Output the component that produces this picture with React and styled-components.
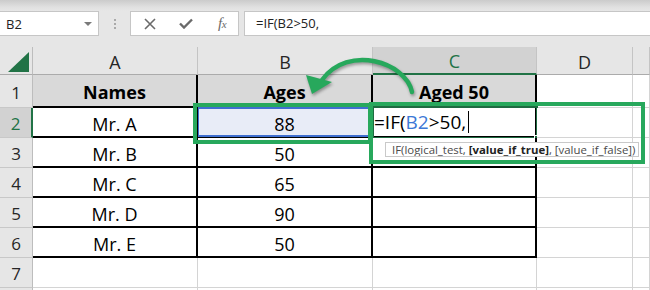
import React from "react";
import styled, { createGlobalStyle } from "styled-components";

const GlobalStyle = createGlobalStyle`
  html, body {
    margin: 0;
    padding: 0;
  }
  body {
    width: 650px;
    height: 290px;
    overflow: hidden;
    background: #fff;
    font-family: "Open Sans", "Liberation Sans", sans-serif;
  }
`;

const Window = styled.div`
  width: 650px;
  height: 290px;
  overflow: hidden;
  display: flex;
  flex-direction: column;
`;

const FormulaBar = styled.div`
  flex: none;
  height: 47px;
  box-sizing: border-box;
  padding-top: 11px;
  display: flex;
  align-items: flex-start;
  background: linear-gradient(#cbcbcb 0, #e0e0e0 7px, #e6e6e6 11px);
`;

const NameBox = styled.div`
  width: 100px;
  height: 25px;
  margin-left: -1px;
  box-sizing: border-box;
  padding: 0 6px 0 6px;
  display: flex;
  align-items: center;
  justify-content: space-between;
  background: #fff;
  border: 1px solid #c6c6c6;
  font-size: 13px;
  color: #222;
`;

const Caret = styled.span`
  width: 0;
  height: 0;
  border-left: 4px solid transparent;
  border-right: 4px solid transparent;
  border-top: 4px solid #7a7a7a;
`;

const Grip = styled.div`
  width: 31px;
  height: 25px;
  display: flex;
  flex-direction: column;
  align-items: center;
  justify-content: center;
  gap: 2px;

  span {
    width: 2px;
    height: 2px;
    background: #a9a9a9;
  }
`;

const FxButtons = styled.div`
  width: 109px;
  height: 25px;
  box-sizing: border-box;
  padding-left: 1px;
  display: grid;
  grid-template-columns: repeat(3, 36px);
  align-items: center;
  justify-items: center;
  background: #fff;
  border: 1px solid #c6c6c6;
  color: #6a6a6a;
`;

const FxLabel = styled.span`
  font-family: "Liberation Serif", serif;
  font-style: italic;
  font-size: 15px;
  color: #6a6a6a;
  letter-spacing: -0.5px;

  small {
    font-size: 11px;
  }
`;

const FormulaInput = styled.div`
  flex: 1;
  height: 25px;
  margin-left: 5px;
  box-sizing: border-box;
  padding-left: 11px;
  background: #fff;
  border: 1px solid #c6c6c6;
  border-right: none;
  font-size: 13px;
  line-height: 23px;
  color: #222;
`;

const Sheet = styled.div`
  position: relative;
  flex: 1;
  background: #fff;
`;

const Grid = styled.div`
  display: grid;
  grid-template-columns: 33px 165px 175px 164px 96px 1fr;
  grid-template-rows: 28px 33px repeat(6, 30px) 4px;
`;

const Corner = styled.div`
  box-sizing: border-box;
  display: flex;
  justify-content: flex-end;
  align-items: flex-end;
  padding: 0 3px 2px 0;
  background: #e6e6e6;
  border-right: 1px solid #bdbdbd;
  border-bottom: 1px solid #ababab;

  &::after {
    content: "";
    width: 0;
    height: 0;
    border-left: 21px solid transparent;
    border-bottom: 20px solid #217346;
  }
`;

const ColHead = styled.div`
  box-sizing: border-box;
  display: flex;
  align-items: center;
  justify-content: center;
  padding-top: 2px;
  font-size: 18px;
  color: ${(p) => (p.$active ? "#217346" : "#262626")};
  background: ${(p) => (p.$active ? "#d2d2d2" : "#e6e6e6")};
  border-right: 1px solid #c4c4c4;
  border-bottom: ${(p) => (p.$active ? "2px solid #217346" : "1px solid #ababab")};
`;

const RowHead = styled.div`
  box-sizing: border-box;
  display: flex;
  align-items: center;
  justify-content: center;
  padding-top: 2px;
  font-size: 17px;
  color: ${(p) => (p.$active ? "#217346" : "#262626")};
  background: ${(p) => (p.$active ? "#d2d2d2" : "#e6e6e6")};
  border-right: ${(p) => (p.$active ? "2px solid #217346" : "1px solid #bdbdbd")};
  border-bottom: 1px solid #c8c8c8;
`;

const Cell = styled.div`
  position: relative;
  box-sizing: border-box;
  display: flex;
  align-items: center;
  justify-content: center;
  padding-top: 3px;
  font-size: 18px;
  font-weight: ${(p) => (p.$head ? 700 : 400)};
  color: #000;
  background: ${(p) => (p.$ref ? "#e8ecf7" : p.$head ? "#d9d9d9" : "#fff")};
  border-right: ${(p) => (p.$table ? "2px solid #000" : "1px solid #d4d4d4")};
  border-bottom: ${(p) => (p.$table ? "2px solid #000" : "1px solid #d4d4d4")};
`;

const RefFrame = styled.div`
  position: absolute;
  top: -1px;
  left: 0;
  right: -2px;
  bottom: -1px;
  border: 2px solid #3f6fd0;
  border-left-width: 1px;
`;

const ActiveFrame = styled.div`
  position: absolute;
  top: -2px;
  left: -1px;
  right: -3px;
  bottom: -3px;
  border: 2px solid #1e6b41;

  &::after {
    content: "";
    position: absolute;
    right: -5px;
    bottom: -5px;
    width: 5px;
    height: 5px;
    background: #1e6b41;
    border: 1px solid #fff;
  }
`;

const EditText = styled.div`
  position: absolute;
  left: 1px;
  top: 0;
  display: flex;
  align-items: center;
  height: 28px;
  font-size: 19px;
  color: #000;
  white-space: pre;
`;

const RefText = styled.span`
  color: #3c78d6;
`;

const TextCursor = styled.span`
  display: inline-block;
  width: 1px;
  height: 22px;
  margin-left: 2px;
  background: #000;
`;

const Tooltip = styled.div`
  position: absolute;
  left: 385px;
  top: 95px;
  width: 254px;
  height: 15px;
  box-sizing: border-box;
  padding-left: 6px;
  background: #fff;
  border: 1px solid #c9c9c9;
  font-size: 11.4px;
  line-height: 13px;
  color: #4a4a4a;
  white-space: nowrap;
  overflow: hidden;

  b {
    color: #222;
  }
`;

const Callout = styled.div`
  position: absolute;
  box-sizing: border-box;
  left: ${(p) => p.$x}px;
  top: ${(p) => p.$y}px;
  width: ${(p) => p.$w}px;
  height: ${(p) => p.$h}px;
  border: 4px solid #27a85c;
  pointer-events: none;
`;

const ArrowLayer = styled.svg`
  position: absolute;
  left: 0;
  top: 0;
  pointer-events: none;
  filter: drop-shadow(1px 2px 1.5px rgba(0, 0, 0, 0.35));
`;

const columns = ["A", "B", "C", "D", ""];

const rows = [
  { n: 1, cells: ["Names", "Ages", "Aged 50"], head: true },
  { n: 2, cells: ["Mr. A", "88", ""] },
  { n: 3, cells: ["Mr. B", "50", ""] },
  { n: 4, cells: ["Mr. C", "65", ""] },
  { n: 5, cells: ["Mr. D", "90", ""] },
  { n: 6, cells: ["Mr. E", "50", ""] },
  { n: 7, cells: ["", "", ""] },
  { n: 8, cells: ["", "", ""], hidden: true },
];

const CloseIcon = () => (
  <svg width="12" height="12" viewBox="0 0 12 12">
    <path d="M1 1 L11 11 M11 1 L1 11" stroke="currentColor" strokeWidth="1.6" fill="none" />
  </svg>
);

const CheckIcon = () => (
  <svg width="14" height="11" viewBox="0 0 14 11">
    <path d="M1 5.5 L5 9.5 L13 1.5" stroke="currentColor" strokeWidth="2.4" fill="none" />
  </svg>
);

const App = () => {
  return (
    <Window>
      <GlobalStyle />
      <FormulaBar>
        <NameBox>
          <span>B2</span>
          <Caret />
        </NameBox>
        <Grip>
          <span />
          <span />
          <span />
        </Grip>
        <FxButtons>
          <CloseIcon />
          <CheckIcon />
          <FxLabel>
            f<small>x</small>
          </FxLabel>
        </FxButtons>
        <FormulaInput>=IF(B2&gt;50,</FormulaInput>
      </FormulaBar>

      <Sheet>
        <Grid>
          <Corner />
          {columns.map((c) => (
            <ColHead key={c || "E"} $active={c === "C"}>
              {c}
            </ColHead>
          ))}
          {rows.map((r) => (
            <React.Fragment key={r.n}>
              <RowHead $active={r.n === 2}>{r.hidden ? null : r.n}</RowHead>
              {r.cells.map((v, i) => {
                const table = r.n <= 6;
                const isRef = r.n === 2 && i === 1;
                const isActive = r.n === 2 && i === 2;
                return (
                  <Cell key={i} $table={table} $head={r.head} $ref={isRef}>
                    {isRef && <RefFrame />}
                    {isActive ? (
                      <>
                        <ActiveFrame />
                        <EditText>
                          =IF(<RefText>B2</RefText>&gt;50,
                          <TextCursor />
                        </EditText>
                      </>
                    ) : (
                      v
                    )}
                  </Cell>
                );
              })}
              <Cell />
              <Cell />
            </React.Fragment>
          ))}
        </Grid>

        <Tooltip>
          IF(logical_test, <b>[value_if_true]</b>, [value_if_false])
        </Tooltip>

        <Callout $x={193} $y={56} $w={179} $h={41} />
        <Callout $x={369} $y={55} $w={276} $h={62} />

        <ArrowLayer width="650" height="243" viewBox="0 47 650 243">
          <path
            d="M412 92 C406 62 348 44 322 80"
            stroke="#27a85c"
            strokeWidth="4.5"
            fill="none"
            strokeLinecap="round"
          />
          <polygon points="312,94 306,75 332,82" fill="#27a85c" />
        </ArrowLayer>
      </Sheet>
    </Window>
  );
};

export default App;
